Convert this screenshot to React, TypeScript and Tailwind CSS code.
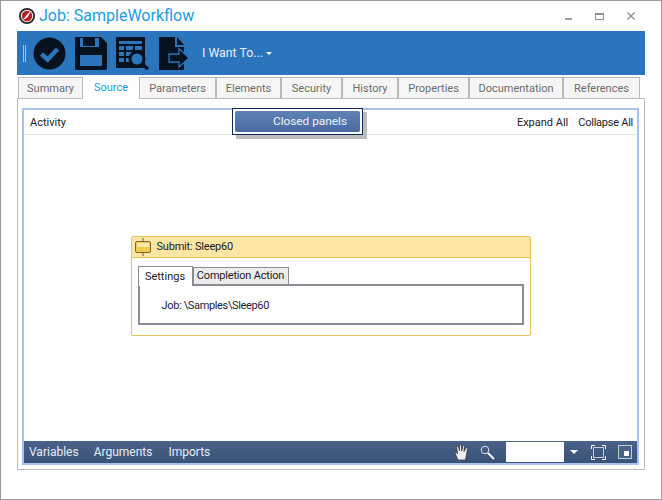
const TABS = [
  { label: "Summary", width: "w-[65px]" },
  { label: "Source", width: "w-[56px]", active: true },
  { label: "Parameters", width: "w-[77px]" },
  { label: "Elements", width: "w-[65px]" },
  { label: "Security", width: "w-[61px]" },
  { label: "History", width: "w-[56px]" },
  { label: "Properties", width: "w-[71px]" },
  { label: "Documentation", width: "w-[94px]" },
  { label: "References", width: "w-[77px]" },
];

function AppLogo() {
  return (
    <svg width="16" height="16" viewBox="0 0 16 16">
      <circle cx="8" cy="8" r="8" fill="#2a2526" />
      <circle cx="8" cy="8" r="6.2" fill="#f4f0f0" />
      <circle cx="8" cy="8" r="5.2" fill="#b5201c" />
      <path d="M11.5 3.5 C9.5 4.5 7 8 4 11.5 C7.5 11 10 8 11.5 3.5 Z" fill="#fff" />
    </svg>
  );
}

function CheckIcon() {
  return (
    <svg width="33" height="33" viewBox="0 0 33 33">
      <circle cx="16.5" cy="16.5" r="16" fill="#07121e" />
      <path d="M8.5 17 L14.5 22.5 L24.5 12" fill="none" stroke="#2b75bc" strokeWidth="4.5" />
    </svg>
  );
}

function SaveIcon() {
  return (
    <svg width="32" height="33" viewBox="0 0 32 33">
      <path d="M1 0 H26 L32 6 V31 Q32 33 30 33 H2 Q0 33 0 31 V1 Q0 0 1 0 Z" fill="#07121e" />
      <rect x="5" y="1" width="19" height="9" fill="#2b75bc" />
      <rect x="8" y="1" width="12" height="8" fill="#07121e" />
      <rect x="20" y="1" width="3" height="8" fill="#2b75bc" />
      <rect x="5" y="18" width="22" height="11" fill="#2b75bc" />
    </svg>
  );
}

function ReportIcon() {
  return (
    <svg width="33" height="33" viewBox="0 0 33 33">
      <rect x="0" y="0" width="29" height="31" fill="#07121e" />
      <g fill="#2b75bc">
        <rect x="3" y="4" width="23" height="3" />
        <rect x="3" y="9" width="5" height="4" />
        <rect x="10" y="9" width="7" height="4" />
        <rect x="19" y="9" width="7" height="4" />
        <rect x="3" y="15" width="5" height="4" />
        <rect x="10" y="15" width="7" height="4" />
        <rect x="3" y="21" width="5" height="4" />
        <rect x="10" y="21" width="5" height="4" />
      </g>
      <circle cx="21" cy="22" r="7" fill="#2b75bc" stroke="#07121e" strokeWidth="3" />
      <path d="M26 27 L32 32" stroke="#07121e" strokeWidth="3.5" />
    </svg>
  );
}

function ExportIcon() {
  return (
    <svg width="31" height="33" viewBox="0 0 31 33">
      <path d="M0 0 H16 V10 H25 V33 H0 Z" fill="#07121e" />
      <path d="M18 0 L25 8 H18 Z" fill="#07121e" />
      <path d="M10 17 H20 V11.5 L30 21 L20 30 V25 H10 Z" fill="#07121e" stroke="#2b75bc" strokeWidth="1.3" />
    </svg>
  );
}

function HandIcon() {
  return (
    <svg width="16" height="17" viewBox="0 0 16 17">
      <path
        d="M4 16 L1 9 C1 8 2.5 8 3 9 L3.6 10 L2.6 3 C2.6 2 4.4 2 4.6 3 L5.5 7 L5.6 1.5 C5.7 .5 7.4 .5 7.4 1.5 L7.8 7 L8.8 2 C9 1 10.5 1.2 10.4 2.2 L10 7.5 L12 4 C12.4 3 13.8 3.5 13.6 4.5 L12.4 11 L11.6 16 Z"
        fill="#ececec"
        stroke="#2f2f2f"
        strokeWidth=".7"
      />
    </svg>
  );
}

function MagnifierIcon() {
  return (
    <svg width="15" height="15" viewBox="0 0 15 15">
      <circle cx="5" cy="5" r="3.8" fill="none" stroke="#dfe5ee" strokeWidth="1" />
      <path d="M8 8 L14 14" stroke="#f5f5f5" strokeWidth="2" />
    </svg>
  );
}

function FitIcon() {
  return (
    <svg width="15" height="15" viewBox="0 0 15 15" fill="none">
      <rect x="2.5" y="2.5" width="10" height="10" stroke="#c4ccd8" />
      <path d="M0.5 4 V.5 H4 M11 .5 H14.5 V4 M14.5 11 V14.5 H11 M4 14.5 H.5 V11" stroke="#fff" />
    </svg>
  );
}

function ActualSizeIcon() {
  return (
    <svg width="14" height="14" viewBox="0 0 14 14">
      <rect x=".5" y=".5" width="13" height="13" fill="#4c6286" stroke="#c4ccd8" />
      <rect x="6" y="6" width="5" height="5" fill="#fff" />
    </svg>
  );
}

function SubmitIcon() {
  return (
    <svg width="16" height="18" viewBox="0 0 16 18">
      <path d="M8 0 V3 M8 15 V18" stroke="#6b5a20" />
      <rect x=".5" y="3.5" width="15" height="11" rx="1.5" fill="#f2cb4e" stroke="#7a6a34" />
      <rect x="2" y="5" width="12" height="4" fill="#fbe9a8" />
    </svg>
  );
}

export default function App() {
  return (
    <div className="relative flex h-[500px] w-[662px] flex-col overflow-hidden border border-[#9b9b9b] bg-white font-['Roboto',sans-serif] text-[11px]">
      <div className="flex h-[30px] shrink-0 items-center pl-[18px] pr-[26px]">
        <AppLogo />
        <span className="ml-[4px] text-[16px] leading-none text-[#1b9ce2]">Job: SampleWorkflow</span>
        <div className="ml-auto flex items-center gap-[23px]">
          <div className="mt-[6px] h-[2px] w-[7px] bg-[#a0a0a0]" />
          <div className="h-[7px] w-[9px] border border-t-2 border-[#8f8f8f]" />
          <svg width="8" height="8" viewBox="0 0 9 9">
            <path d="M.5 .5 L8.5 8.5 M8.5 .5 L.5 8.5" stroke="#8f8f8f" strokeWidth="1.5" />
          </svg>
        </div>
      </div>

      <div className="mx-[16px] flex h-[44px] shrink-0 items-center bg-[#2b75bc] pl-[6px]">
        <div className="h-[17px] w-[3px] border-x border-[#9fc3e6]" />
        <div className="ml-[7px] flex items-center gap-[9px]">
          <CheckIcon />
          <SaveIcon />
          <ReportIcon />
          <div className="ml-[1px]">
            <ExportIcon />
          </div>
        </div>
        <span className="ml-[12px] text-[12.3px] text-[#e8f0f8]">I Want To...</span>
        <div className="ml-[3px] mt-[1px] h-0 w-0 border-x-[3px] border-t-[3px] border-x-transparent border-t-white" />
      </div>

      <div className="ml-[17px] flex h-[23px] shrink-0 items-end">
        {TABS.map((tab) =>
          tab.active ? (
            <div
              key={tab.label}
              className={`${tab.width} relative z-10 -mb-px flex h-[24px] items-center justify-center bg-white pt-[2px] text-[#1b9ce2]`}
            >
              {tab.label}
            </div>
          ) : (
            <div
              key={tab.label}
              className={`${tab.width} flex h-[21px] items-center justify-center border border-b-0 border-[#b9b9b9] bg-[#f5f5f5] pt-[2px] text-[#6c6c6c]`}
            >
              {tab.label}
            </div>
          ),
        )}
      </div>

      <div className="mx-[16px] flex h-[372px] shrink-0 flex-col border border-[#bcbcbc] bg-white pb-[4px] pl-[4px] pr-[5px] pt-[9px]">
        <div className="relative flex min-h-0 flex-1 flex-col border-2 border-[#a6c4ef]">
          <div className="flex h-[25px] shrink-0 items-center border-b border-[#dde6ef] pl-[6px] pr-[4px] pt-[3px] text-[#1c1c1c]">
            <span>Activity</span>
            <span className="ml-auto">Expand All</span>
            <span className="ml-[10px] tracking-[-0.25px]">Collapse All</span>
          </div>

          <div className="absolute left-[208px] top-[-2px] border border-[#0d2a5e] bg-white p-[2px] shadow-[4px_4px_0_#bdbdbd]">
            <div className="flex h-[21px] w-[125px] items-center rounded-[2px] bg-gradient-to-b from-[#5f82b6] to-[#4a6ba2] pl-[38px] pt-[1px] text-[11.8px] text-[#eef3fa]">
              Closed panels
            </div>
          </div>

          <div className="flex flex-1 justify-center pt-[101px]">
            <div className="h-[100px] w-[400px] rounded-[2px] border border-[#e8c35e] bg-white">
              <div className="flex h-[21px] items-center gap-[6px] border-b border-[#e8c35e] bg-[#fde6a4] pl-[3px] tracking-[-0.2px] text-[#1c1c1c]">
                <SubmitIcon />
                <span>Submit: Sleep60</span>
              </div>
              <div className="px-[6px] pt-[7px]">
                <div className="flex h-[19px] items-end">
                  <div className="relative z-10 -mb-[2px] flex h-[20px] w-[55px] items-center justify-center border border-b-0 border-[#8a8d96] bg-white pt-[1px] text-[#1c1c1c]">
                    Settings
                  </div>
                  <div className="flex h-[17px] w-[96px] items-center justify-center whitespace-nowrap border border-b-0 border-[#8a8d96] bg-[#ececec] tracking-[-0.2px] text-[#1c1c1c]">
                    Completion Action
                  </div>
                </div>
                <div className="flex h-[41px] w-[386px] items-center border-2 border-[#8a8d96] pl-[22px] pt-[3px] tracking-[-0.35px] text-[#1c1c3c]">
                  Job: \Samples\Sleep60
                </div>
              </div>
            </div>
          </div>

          <div className="flex h-[22px] shrink-0 items-center bg-gradient-to-b from-[#4a6287] to-[#3a5178] pl-[5px] pr-[5px] text-[12px] text-[#e6eef8]">
            <span>Variables</span>
            <span className="ml-[15px]">Arguments</span>
            <span className="ml-[16px]">Imports</span>
            <div className="ml-auto flex items-center">
              <HandIcon />
              <div className="ml-[10px]">
                <MagnifierIcon />
              </div>
              <div className="ml-[11px] h-[20px] w-[58px] bg-white" />
              <div className="ml-[6px] h-0 w-0 border-x-[4px] border-t-[4px] border-x-transparent border-t-white" />
              <div className="ml-[13px]">
                <FitIcon />
              </div>
              <div className="ml-[12px]">
                <ActualSizeIcon />
              </div>
            </div>
          </div>
        </div>
      </div>
    </div>
  );
}
